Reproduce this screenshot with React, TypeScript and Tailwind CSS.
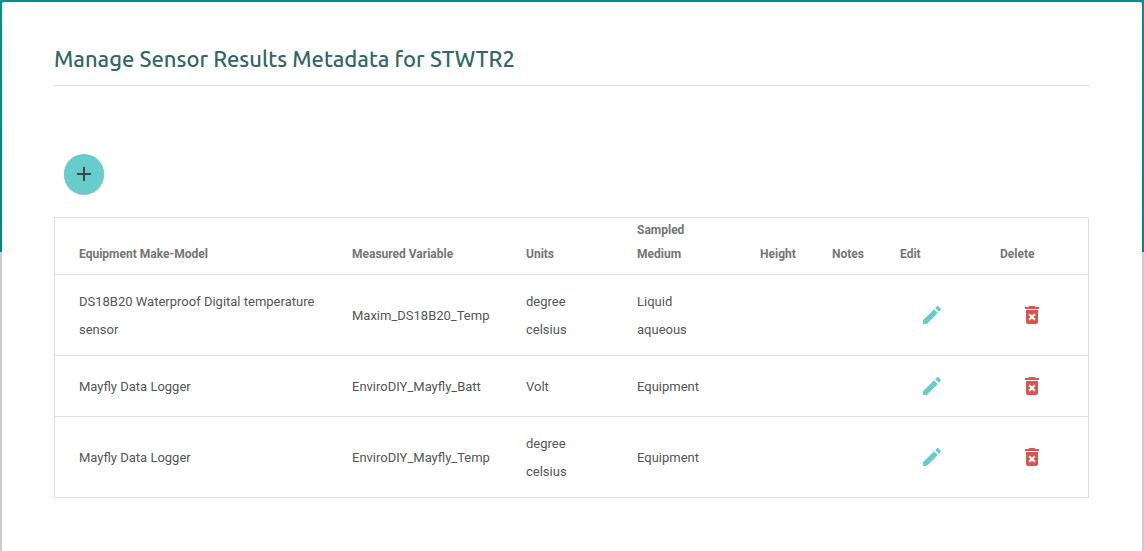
import { MdAdd, MdDeleteForever, MdEdit } from "react-icons/md";

type SensorResult = {
  equipment: string;
  variable: string;
  units: string;
  medium: string;
  height: string;
  notes: string;
};

const results: SensorResult[] = [
  {
    equipment: "DS18B20 Waterproof Digital temperature sensor",
    variable: "Maxim_DS18B20_Temp",
    units: "degree celsius",
    medium: "Liquid aqueous",
    height: "",
    notes: "",
  },
  {
    equipment: "Mayfly Data Logger",
    variable: "EnviroDIY_Mayfly_Batt",
    units: "Volt",
    medium: "Equipment",
    height: "",
    notes: "",
  },
  {
    equipment: "Mayfly Data Logger",
    variable: "EnviroDIY_Mayfly_Temp",
    units: "degree celsius",
    medium: "Equipment",
    height: "",
    notes: "",
  },
];

const headers = [
  "Equipment Make-Model",
  "Measured Variable",
  "Units",
  "Sampled Medium",
  "Height",
  "Notes",
  "Edit",
  "Delete",
];

function ResultRow({ result }: { result: SensorResult }) {
  const textCell = "border-t border-[#dedede] px-[18px] pt-[13px] pb-[11px] first:pl-6";
  const actionCell = "border-t border-[#dedede] px-[18px] py-3";
  return (
    <tr>
      <td className={textCell}>{result.equipment}</td>
      <td className={textCell}>{result.variable}</td>
      <td className={textCell}>{result.units}</td>
      <td className={textCell}>{result.medium}</td>
      <td className={textCell}>{result.height}</td>
      <td className={textCell}>{result.notes}</td>
      <td className={actionCell}>
        <button
          type="button"
          aria-label={`Edit ${result.variable}`}
          className="flex h-9 w-16 items-center justify-center text-[#66cccc]"
        >
          <MdEdit className="size-6" />
        </button>
      </td>
      <td className={actionCell}>
        <button
          type="button"
          aria-label={`Delete ${result.variable}`}
          className="flex h-9 w-16 items-center justify-center text-[#d9534f]"
        >
          <MdDeleteForever className="size-6" />
        </button>
      </td>
    </tr>
  );
}

export default function App() {
  return (
    <div className="min-h-screen bg-[#cccccc] bg-[linear-gradient(#009090,#008585)] bg-[length:100%_252px] bg-no-repeat px-0.5 pt-0.5 font-[Roboto,sans-serif]">
      <main className="min-h-[calc(100vh-2px)] rounded-t-[2px] bg-white pt-10 pr-[53px] pb-10 pl-[52px]">
        <h1 className="border-b border-[#dddddd] pt-[3px] pb-3 font-[Ubuntu,'Noto_Sans',sans-serif] text-[22px] leading-7 font-medium text-[#336666]">
          Manage Sensor Results Metadata for STWTR2
        </h1>
        <button
          type="button"
          aria-label="Add sensor result"
          className="mt-[68px] ml-2.5 flex size-10 items-center justify-center rounded-full bg-[#66cccc] text-[#444444] shadow-[0_1px_1px_rgba(0,0,0,0.3)]"
        >
          <MdAdd className="size-6" />
        </button>
        <table className="mt-[23px] w-full table-fixed border-separate border-spacing-0 border border-[#dedede] text-left text-[13px] leading-7 text-[#555555]">
          <colgroup>
            <col />
            <col className="w-[174px]" />
            <col className="w-[111px]" />
            <col className="w-[123px]" />
            <col className="w-[72px]" />
            <col className="w-[68px]" />
            <col className="w-[100px]" />
            <col className="w-[106px]" />
          </colgroup>
          <thead>
            <tr className="h-14 align-bottom text-xs leading-6 text-[#757575]">
              {headers.map((header) => (
                <th
                  key={header}
                  scope="col"
                  className="px-[18px] pb-2 font-bold first:pl-6"
                >
                  {header}
                </th>
              ))}
            </tr>
          </thead>
          <tbody>
            {results.map((result) => (
              <ResultRow key={result.variable} result={result} />
            ))}
          </tbody>
        </table>
      </main>
    </div>
  );
}
